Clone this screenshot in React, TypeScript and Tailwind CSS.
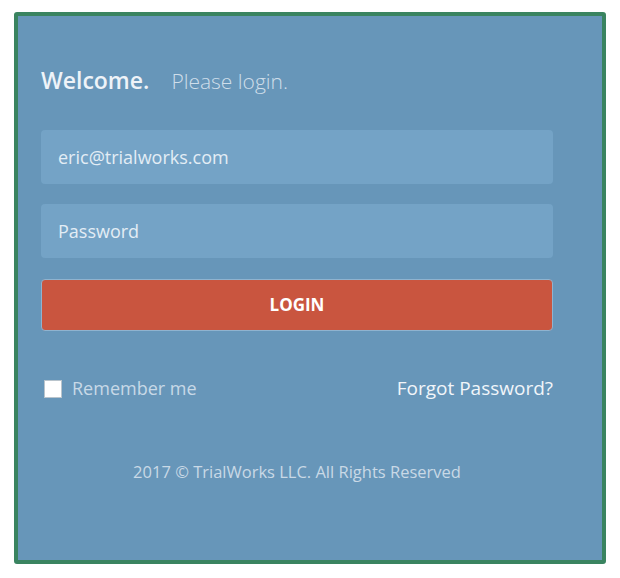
export default function App() {
  return (
    <div className="min-h-[578px] bg-white pl-[14px] pt-[12px]" style={{ fontFamily: '"Open Sans", "Noto Sans", sans-serif' }}>
      <div className="flex h-[552px] w-[592px] flex-col rounded-[3px] border-4 border-[#3a8460] bg-[#6796b9] pl-[23px]">
        <div className="w-[512px]">
          <h1 className="mt-[48px] flex items-baseline gap-[22px] leading-[32px]">
            <span className="text-[23px] font-semibold text-[#eef3f8]">Welcome.</span>
            <span className="text-[21px] font-light text-[#cfdeea]">Please login.</span>
          </h1>

          <div className="mt-[33px] flex h-[54px] items-center rounded-[4px] bg-[#74a3c6] px-[17px] text-[18px] text-[#e3edf5]">
            eric@trialworks.com
          </div>
          <div className="mt-[20px] flex h-[54px] items-center rounded-[4px] bg-[#74a3c6] px-[17px] text-[18px] text-[#e3edf5]">
            Password
          </div>

          <button className="mt-[21px] flex h-[52px] w-full items-center justify-center rounded-[4px] border border-[#8fb3cf] bg-[#c9553f] text-[17px] font-bold text-white">
            LOGIN
          </button>

          <div className="mt-[44px] flex h-[27px] items-center justify-between">
            <label className="flex items-center gap-[10px] pl-[3px]">
              <span className="h-[18px] w-[18px] border border-[#b9c4cc] bg-white" />
              <span className="text-[18px] text-[#c8d9e7]">Remember me</span>
            </label>
            <a className="text-[19px] text-[#f1f5f9]">Forgot Password?</a>
          </div>

          <p className="mt-[58px] text-center text-[16.5px] leading-[24px] text-[#c9d9e6]">
            2017 © TrialWorks LLC. All Rights Reserved
          </p>
        </div>
      </div>
    </div>
  );
}
